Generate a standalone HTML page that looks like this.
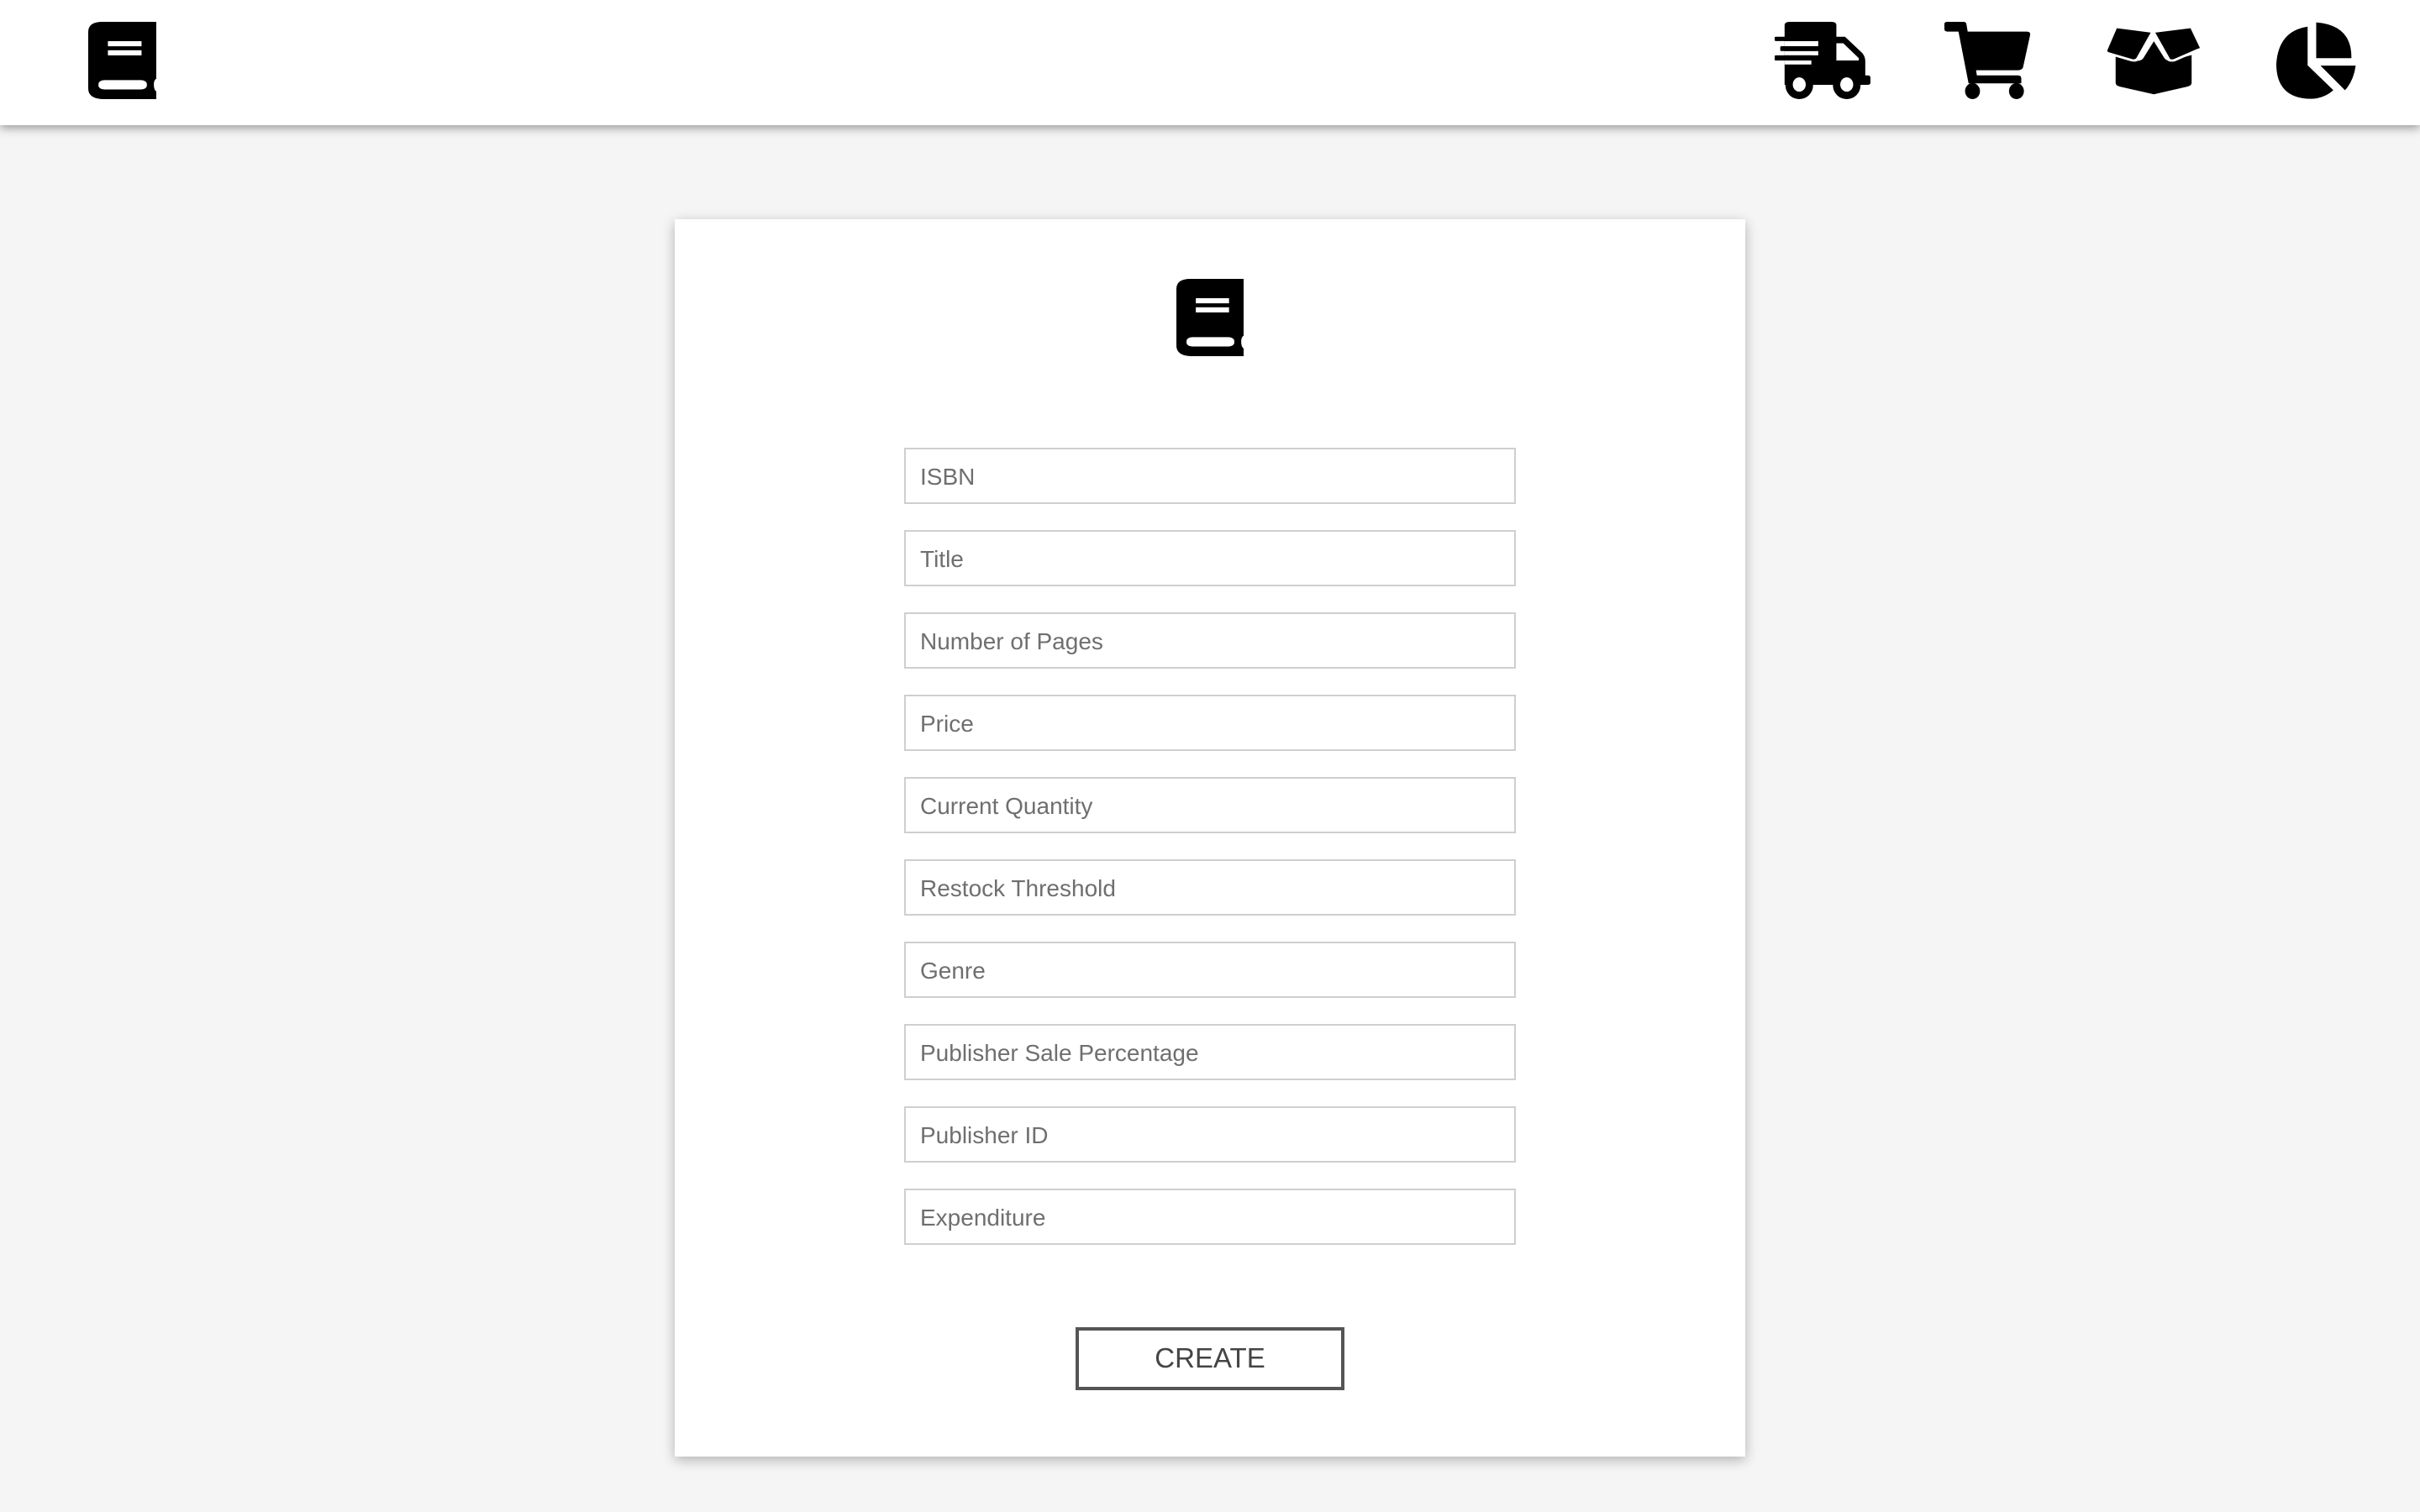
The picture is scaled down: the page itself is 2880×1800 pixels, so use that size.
<!DOCTYPE html>
<html><head><meta charset="utf-8"><style>
*{margin:0;padding:0;box-sizing:border-box}
html,body{width:2880px;height:1800px;background:#f5f5f5;overflow:hidden;font-family:"Liberation Sans",sans-serif}
.hdr{position:absolute;left:0;top:0;width:2880px;height:149px;background:#fff;box-shadow:0 4px 10px rgba(0,0,0,.35)}
svg{position:absolute;display:block}
.card{position:absolute;left:803px;top:261px;width:1274px;height:1473px;background:#fff;box-shadow:0 4px 14px rgba(0,0,0,.28)}
.in{position:absolute;left:273px;width:728px;height:67px;border:2px solid #cfcfcf;font-size:28px;color:#6f6f6f;padding-left:17px;line-height:66px}
.btn{position:absolute;left:477px;top:1319px;width:320px;height:75px;border:4px solid #555;font-size:33px;color:#444;text-align:center;line-height:66px}
</style></head><body>
<div class="hdr">
<svg style="left:105px;top:26px;width:81px;height:92px" viewBox="700 100 166 272" preserveAspectRatio="none"><path d="M735,100H866V300Q860,305 860,320Q860,340 866,345V372H740Q700,372 700,335V135Q700,100 735,100Z"/><rect x="748" y="168" width="82" height="18" fill="#fff"/><rect x="748" y="200" width="82" height="18" fill="#fff"/><rect x="725" y="305" width="118" height="33" rx="14" fill="#fff"/></svg>
<svg style="left:2112px;top:26px;width:114px;height:92px" viewBox="65 83 222 270" preserveAspectRatio="none"><path d="M88,150V95Q88,83 100,83H196Q208,83 208,95V135H228L268,192Q275,205 275,220V270H280Q287,270 287,278V296Q287,303 280,303H88Z"/><path d="M208,158H224L260,210V218H208Z" fill="#fff"/><rect x="88" y="150" width="78" height="18" fill="#fff"/><rect x="88" y="185" width="78" height="15" fill="#fff"/><rect x="88" y="218" width="62" height="14" fill="#fff"/><rect x="65" y="135" width="100" height="15" rx="3"/><rect x="78" y="168" width="87" height="17" rx="3"/><rect x="65" y="200" width="90" height="18" rx="3"/><ellipse cx="122" cy="305" rx="32" ry="48"/><ellipse cx="122" cy="302" rx="15" ry="25" fill="#fff"/><ellipse cx="232" cy="305" rx="32" ry="48"/><ellipse cx="232" cy="302" rx="15" ry="25" fill="#fff"/></svg>
<svg style="left:2314px;top:26px;width:103px;height:92px" viewBox="463 83 197 270" preserveAspectRatio="none"><path d="M463,90Q463,83 470,83H506Q512,83 513,90L516,117H650Q660,117 658,130L642,242Q640,252 630,252H535L537,270H630Q638,270 638,280V298H518L495,117H470Q463,117 463,108Z"/><ellipse cx="527" cy="325" rx="17" ry="28"/><ellipse cx="627" cy="325" rx="17" ry="28"/></svg>
<svg style="left:2505px;top:32px;width:116px;height:82px" viewBox="833 100 227 240" preserveAspectRatio="none"><path d="M858,198L900,216Q915,222 922,210L947,150L972,210Q980,222 992,216L1035,198V295Q1035,305 1025,308L947,335L868,308Q858,305 858,295Z"/><path d="M858,100L945,117L910,210Q905,220 895,216L840,192Q833,188 835,180Z" stroke="#fff" stroke-width="8"/><path d="M945,117L1035,100L1058,172Q1058,178 1050,180L995,216Q982,220 980,210Z" stroke="#fff" stroke-width="8"/></svg>
<svg style="left:2709px;top:26px;width:97px;height:92px" viewBox="1235 83 190 270" preserveAspectRatio="none"><path d="M1328,85Q1410,95 1410,205V210H1328Z"/><path d="M1338,236H1420Q1415,290 1395,322Z"/><path d="M1308,100V235L1368,322Q1345,352 1315,352Q1235,350 1235,230Q1240,115 1308,100Z"/></svg>
</div>
<div class="card">
<svg style="left:597px;top:71px;width:80px;height:92px" viewBox="700 100 166 272" preserveAspectRatio="none"><path d="M735,100H866V300Q860,305 860,320Q860,340 866,345V372H740Q700,372 700,335V135Q700,100 735,100Z"/><rect x="748" y="168" width="82" height="18" fill="#fff"/><rect x="748" y="200" width="82" height="18" fill="#fff"/><rect x="725" y="305" width="118" height="33" rx="14" fill="#fff"/></svg>
<div class="in" style="top:272px">ISBN</div>
<div class="in" style="top:370px">Title</div>
<div class="in" style="top:468px">Number of Pages</div>
<div class="in" style="top:566px">Price</div>
<div class="in" style="top:664px">Current Quantity</div>
<div class="in" style="top:762px">Restock Threshold</div>
<div class="in" style="top:860px">Genre</div>
<div class="in" style="top:958px">Publisher Sale Percentage</div>
<div class="in" style="top:1056px">Publisher ID</div>
<div class="in" style="top:1154px">Expenditure</div>
<div class="btn">CREATE</div>
</div>
</body></html>
